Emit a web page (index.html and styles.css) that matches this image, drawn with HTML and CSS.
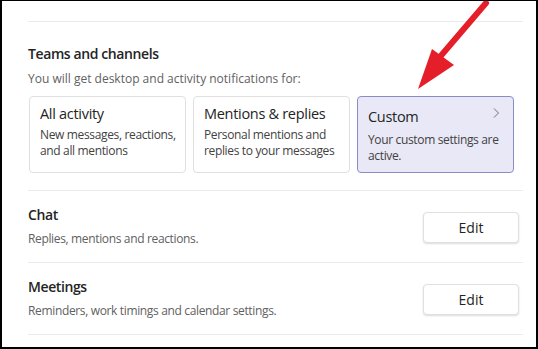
FILE: index.html
```html
<!DOCTYPE html>
<html lang="en">
<head>
    <meta charset="UTF-8">
    <title>Notifications</title>
    <link rel="stylesheet" href="styles.css">
</head>
<body>
    <div class="frame">
        <div class="settings">

            <!-- Teams and channels -->
            <section class="section section-teams">
                <h2 class="section-title">Teams and channels</h2>
                <p class="section-desc">You will get desktop and activity notifications for:</p>
                <div class="cards">
                    <div class="card">
                        <div class="card-title">All activity</div>
                        <div class="card-desc">New messages, reactions, and all mentions</div>
                    </div>
                    <div class="card">
                        <div class="card-title">Mentions &amp; replies</div>
                        <div class="card-desc">Personal mentions and replies to your messages</div>
                    </div>
                    <div class="card card-active">
                        <div class="card-head">
                            <div class="card-title">Custom</div>
                            <svg class="chevron" width="8" height="12" viewBox="0 0 8 12">
                                <path d="M2 1.5 L6.5 6 L2 10.5" fill="none" stroke="#707070" stroke-width="1"/>
                            </svg>
                        </div>
                        <div class="card-desc">Your custom settings are active.</div>
                    </div>
                </div>
            </section>

            <!-- Chat -->
            <section class="section row">
                <div class="row-text">
                    <h2 class="section-title">Chat</h2>
                    <p class="section-desc">Replies, mentions and reactions.</p>
                </div>
                <button type="button" class="edit-btn">Edit</button>
            </section>

            <!-- Meetings -->
            <section class="section row">
                <div class="row-text">
                    <h2 class="section-title">Meetings</h2>
                    <p class="section-desc">Reminders, work timings and calendar settings.</p>
                </div>
                <button type="button" class="edit-btn">Edit</button>
            </section>
        </div>

        <!-- red pointer arrow drawn over the page -->
        <svg class="pointer" width="538" height="100" viewBox="0 0 538 100">
            <line x1="486" y1="3" x2="439" y2="58" stroke="#e51f29" stroke-width="6" stroke-linecap="round"/>
            <polygon points="432,49 454,65 418,89" fill="#e51f29"/>
        </svg>
    </div>
</body>
</html>
```

FILE: styles.css
```css
* {
    box-sizing: border-box;
}

body {
    margin: 0;
    padding: 0;
    font-family: 'Open Sans', 'Noto Sans', sans-serif;
    color: #242424;
    background-color: #ffffff;
}

.frame {
    position: relative;
    width: 538px;
    height: 349px;
    border-style: solid;
    border-color: #000;
    border-width: 1px 2px 2px 2px;
    overflow: hidden;
    padding: 20px 13px 0 26px;
}

.settings {
    border-top: 1px solid #ebebeb;
}

/* Sections */
.section {
    border-bottom: 1px solid #ebebeb;
    padding: 14px 0 15px 0;
}

.section-teams {
    padding: 22px 0 17px 0;
}

.section-title {
    margin: 0;
    font-size: 14px;
    line-height: 20px;
    font-weight: 600;
    letter-spacing: -0.4px;
}

.section-desc {
    margin: 6px 0 0 0;
    font-size: 12px;
    line-height: 16px;
    color: #616161;
    letter-spacing: -0.35px;
}

.section-teams .section-desc {
    margin-top: 7px;
    letter-spacing: 0;
}

/* Option cards */
.cards {
    display: flex;
    gap: 7px;
    margin-top: 9px;
    padding-left: 1px;
}

.card {
    width: 157px;
    height: 77px;
    border: 1px solid #e0e0e0;
    border-radius: 4px;
    padding: 7px 8px 0 10px;
}

.card-title {
    font-size: 14.5px;
    line-height: 20px;
    letter-spacing: -0.3px;
}

.card-desc {
    margin-top: 3px;
    font-size: 12px;
    line-height: 16px;
    color: #424242;
    letter-spacing: -0.35px;
}

.card-active {
    background-color: #e8e8f6;
    border-color: #8b8cc7;
    padding-top: 10px;
}

.card-active .card-desc {
    margin-top: 5px;
}

.card-head {
    display: flex;
    justify-content: space-between;
    align-items: flex-start;
}

.chevron {
    margin-top: 0;
    margin-right: 5px;
}

/* Chat / Meetings rows */
.row {
    display: flex;
    align-items: center;
    justify-content: space-between;
}

.edit-btn {
    width: 96px;
    height: 31px;
    margin-right: 4px;
    margin-top: 2px;
    background-color: #fff;
    border: 1px solid #e0e0e0;
    border-radius: 4px;
    box-shadow: 0 1px 2px rgba(0, 0, 0, 0.14);
    font-family: inherit;
    font-size: 14px;
    color: #242424;
    cursor: pointer;
}

.pointer {
    position: absolute;
    left: -2px;
    top: -1px;
    pointer-events: none;
}
```
